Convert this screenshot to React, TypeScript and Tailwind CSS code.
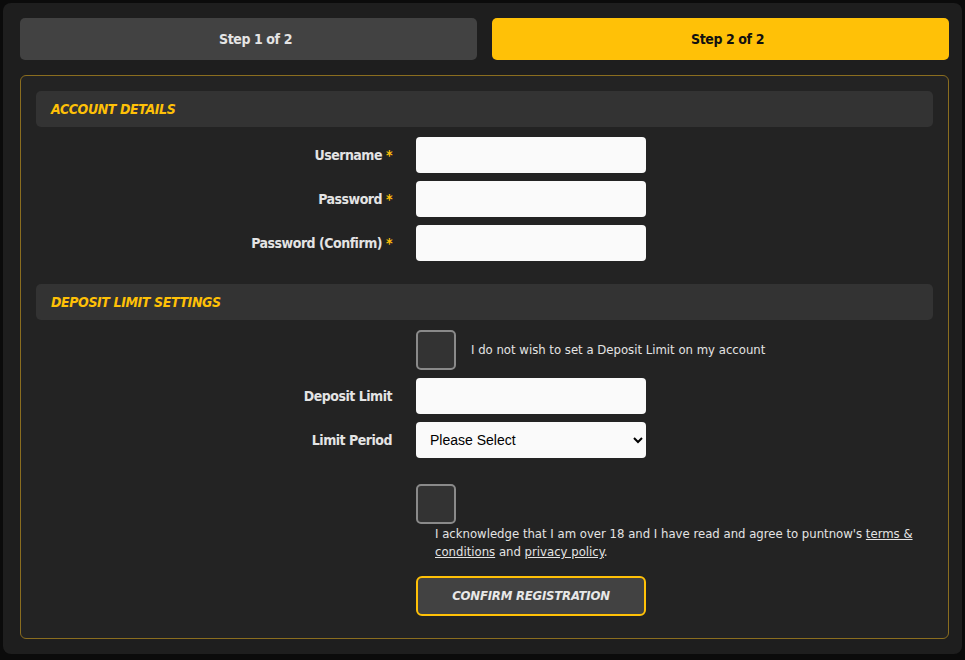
import React from 'react';

const font = { fontFamily: '"Liberation Sans Narrow", "DejaVu Sans Condensed", sans-serif' };

function Field({ label, required, children }: { label: string; required?: boolean; children: React.ReactNode }) {
  return (
    <div className="flex items-center">
      <label className="w-[356px] text-right text-[14px] font-bold tracking-[-0.5px] text-[#e4e4e4]">
        {label}
        {required && <span className="text-[#ffc107]"> *</span>}
      </label>
      <div className="ml-[24px]">{children}</div>
    </div>
  );
}

function SectionHeader({ title }: { title: string }) {
  return (
    <div className="h-[36px] rounded-[5px] bg-[#333333] px-[15px] flex items-center">
      <h2 className="text-[14px] font-bold italic uppercase tracking-[-0.4px] text-[#ffc107]">{title}</h2>
    </div>
  );
}

const inputCls = 'block w-[230px] h-[36px] rounded-[4px] bg-[#fafafa] px-3 text-sm text-black outline-none';

export default function App() {
  return (
    <div className="min-h-screen bg-[#0b0b0b] p-[3px]" style={font}>
      <div className="rounded-[8px] bg-[#1e1e1e] pl-[17px] pr-[13px] pt-[15px] pb-[15px]">
        <div className="flex gap-[15px]">
          <button className="flex-1 h-[42px] rounded-[5px] bg-[#424242] pl-[14px] text-[14px] font-bold tracking-[-0.4px] text-[#e4e4e4]">Step 1 of 2</button>
          <button className="flex-1 h-[42px] rounded-[5px] bg-[#ffc107] pl-[14px] text-[14px] font-bold tracking-[-0.4px] text-[#111]">Step 2 of 2</button>
        </div>

        <form className="mt-[15px] rounded-[6px] border border-[#8a6d1f] bg-[#232323] px-[15px] pt-[15px] pb-[22px]">
          <SectionHeader title="Account Details" />
          <div className="mt-[10px] flex flex-col gap-[8px]">
            <Field label="Username" required><input className={inputCls} /></Field>
            <Field label="Password" required><input type="password" className={inputCls} /></Field>
            <Field label="Password (Confirm)" required><input type="password" className={inputCls} /></Field>
          </div>

          <div className="mt-[23px]">
            <SectionHeader title="Deposit Limit Settings" />
          </div>
          <div className="mt-[10px] flex items-center pl-[380px]">
            <span className="w-[40px] h-[40px] rounded-[5px] border-2 border-[#8a8a8a] bg-[#333333]" />
            <span className="ml-[15px] text-[13px] text-[#e4e4e4]">I do not wish to set a Deposit Limit on my account</span>
          </div>
          <div className="mt-[8px] flex flex-col gap-[8px]">
            <Field label="Deposit Limit"><input className={inputCls} /></Field>
            <Field label="Limit Period">
              <select className={inputCls + ' pl-[10px]'} style={{ fontFamily: '"Liberation Sans", Arial, sans-serif' }} defaultValue="">
                <option value="">Please Select</option>
                <option>Daily</option>
                <option>Weekly</option>
                <option>Monthly</option>
              </select>
            </Field>
          </div>

          <div className="mt-[26px] pl-[380px]">
            <span className="block w-[40px] h-[40px] rounded-[5px] border-2 border-[#8a8a8a] bg-[#333333]" />
            <p className="mt-[1px] pl-[19px] pr-[20px] text-[13px] leading-[18px] text-[#e4e4e4]">
              I acknowledge that I am over 18 and I have read and agree to puntnow's{' '}
              <a className="underline">terms &amp;</a>
              <br />
              <a className="underline">conditions</a> and <a className="underline">privacy policy</a>.
            </p>
            <button type="button" className="mt-[15px] w-[230px] h-[40px] rounded-[6px] border-2 border-[#ffc107] bg-[#424242] text-[13px] font-bold italic tracking-[-0.2px] text-[#e8e8e8]">
              CONFIRM REGISTRATION
            </button>
          </div>
        </form>
      </div>
    </div>
  );
}
